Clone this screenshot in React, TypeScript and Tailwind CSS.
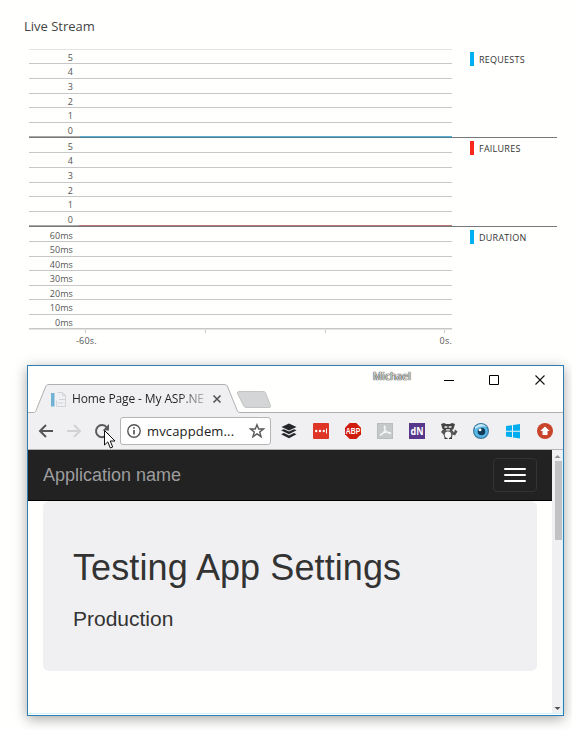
import type { ReactNode } from "react";

const UI = "font-['Open_Sans','Noto_Sans',sans-serif]";
const ARIAL = "font-['Liberation_Sans',Arial,sans-serif]";

type Row = { label: string; h: string; pad?: string };

const requests: Row[] = [
  { label: "5", h: "h-[14px]" },
  { label: "4", h: "h-[15px]" },
  { label: "3", h: "h-[15px]" },
  { label: "2", h: "h-[14px]" },
  { label: "1", h: "h-[15px]" },
];
const failures: Row[] = [
  { label: "5", h: "h-[15px]", pad: "pt-[2px]" },
  { label: "4", h: "h-[15px]" },
  { label: "3", h: "h-[15px]" },
  { label: "2", h: "h-[14px]" },
  { label: "1", h: "h-[15px]" },
];
const duration: Row[] = [
  { label: "60ms", h: "h-[15px]", pad: "pt-[2px]" },
  { label: "50ms", h: "h-[15px]" },
  { label: "40ms", h: "h-[14px]" },
  { label: "30ms", h: "h-[15px]" },
  { label: "20ms", h: "h-[14px]" },
  { label: "10ms", h: "h-[15px]" },
  { label: "0ms", h: "h-[14px]" },
];

function Label({ children, pad = "pt-px" }: { children: ReactNode; pad?: string }) {
  return <span className={`block w-[44px] ${pad} text-right text-[9px] leading-[14px] tracking-[0.1px] text-[#555]`}>{children}</span>;
}

function Rows({ rows }: { rows: Row[] }) {
  return (
    <>
      {rows.map((r) => (
        <div key={r.label} className={`${r.h} w-[423px] border-b border-[#c8c8c8]`}>
          <Label pad={r.pad}>{r.label}</Label>
        </div>
      ))}
    </>
  );
}

type SeriesProps = { rows: Row[]; name: string; swatch: string; legendPad: string; line?: ReactNode };

function Series({ rows, name, swatch, legendPad, line }: SeriesProps) {
  return (
    <div className="flex">
      <div className="w-[423px]">
        <Rows rows={rows} />
        {line && (
          <div className="flex h-[15px] flex-col justify-between">
            <div className="h-[13px]"><Label>0</Label></div>
            {line}
          </div>
        )}
      </div>
      <div className={`flex flex-1 items-start pl-[18px] ${legendPad} ${line ? "border-b border-[#777]" : ""}`}>
        <span className={`h-[14px] w-1 ${swatch}`} />
        <span className="ml-[5px] mt-px text-[9px] leading-[14px] tracking-[0.25px] text-[#333]">{name}</span>
      </div>
    </div>
  );
}

function Chart() {
  return (
    <div className="ml-[29px] h-[299px] w-[528px]">
      <div className="h-px w-[423px] bg-[#e4e4e4]" />
      <Series
        rows={requests}
        name="REQUESTS"
        swatch="bg-[#00b0f5]"
        legendPad="pt-[2px]"
        line={
          <div className="flex h-[2px]">
            <div className="w-[51px] border-b border-[#777] bg-[#aaa]" />
            <div className="flex-1 border-b border-[#4e7f95] bg-[#5cafd1]" />
          </div>
        }
      />
      <Series
        rows={failures}
        name="FAILURES"
        swatch="bg-[#f8281e]"
        legendPad="pt-[3px]"
        line={
          <div className="flex h-[2px]">
            <div className="w-[50px] border-b border-[#777] bg-[#aaa]" />
            <div className="flex-1 border-b border-[#777] bg-[#b97779]" />
          </div>
        }
      />
      <Series rows={duration} name="DURATION" swatch="bg-[#00b0f5]" legendPad="pt-[3px]" />
      <div className="flex h-1 w-[423px] border-t border-[#e4e4e4] pl-[56px]">
        <i className="h-[3px] w-px bg-[#c8c8c8]" />
        <i className="ml-[119px] h-[3px] w-px bg-[#c8c8c8]" />
        <i className="ml-[119px] h-[3px] w-px bg-[#c8c8c8]" />
        <i className="ml-[118px] h-[3px] w-px bg-[#c8c8c8]" />
      </div>
      <div className="flex w-[423px] justify-between pl-[47px] pt-px text-[9px] leading-[14px] tracking-[0.2px] text-[#555]">
        <span>-60s.</span>
        <span>0s.</span>
      </div>
    </div>
  );
}

function TabStrip() {
  return (
    <div className="relative h-[47px]">
      <svg className="absolute left-0 top-0" width="535" height="47" viewBox="28 366 535 47" fill="none">
        <path d="M28 412.500H33.500C35 412.500 35.600 411.500 36 410.500L45.500 387C46.300 385 47 384.500 49 384.500H224C226 384.500 227 385 227.700 387L237 410C237.700 412 238.500 412.500 240 412.500H563V414H28Z" fill="#f0f0f2" />
        <path d="M28 412.500H33.500C35 412.500 35.600 411.500 36 410.500L45.500 387C46.300 385 47 384.500 49 384.500H224C226 384.500 227 385 227.700 387L237 410C237.700 412 238.500 412.500 240 412.500H563" stroke="#b0b0b0" />
        <path d="M239 391.500H263.500Q265 391.500 265.600 393L270.500 405.500Q271 407.500 269 407.500H246Q244.500 407.500 243.800 406L237.500 393.500Q237 391.500 239 391.500Z" fill="#d4d5d7" stroke="#c4c4c4" />
        <rect x="51" y="393" width="3.500" height="13.500" fill="#6fb2d2" />
        <path d="M57.500 392.500H62.500L65.500 395.500V406.500H56.500V400.500M62.500 392.500V395.500H65.500M59 399.500H65M58 403H63" stroke="#d0d5da" />
        <path d="M213.500 395.500L220.500 402.500M220.500 395.500L213.500 402.500" stroke="#555" strokeWidth="1.600" />
        <path d="M444 380.500H454" stroke="#000" />
        <path d="M489.500 375.500H498.500V384.500H489.500Z" stroke="#000" />
        <path d="M535.500 375.500L544.500 384.500M544.500 375.500L535.500 384.500" stroke="#111" strokeWidth="1.100" />
      </svg>
      <div className="relative flex justify-between">
        <div className={`ml-[44px] mt-[25px] w-[132px] overflow-hidden whitespace-nowrap bg-gradient-to-r from-[#222] from-80% to-[#bbb] bg-clip-text text-[12px] leading-4 tracking-[-0.12px] text-transparent ${UI}`}>
          Home Page - My ASP.NE
        </div>
        <div className="mr-[152px] mt-[3px] text-[10px] leading-[14px] tracking-[0.25px] text-[#eee] [text-shadow:0_0_1px_#222,0_0_1px_#222,0_0_1px_#444]">Michael</div>
      </div>
    </div>
  );
}

function Extensions() {
  return (
    <svg className="ml-[10px]" width="276" height="36" viewBox="281 413 276 36" fill="none">
      <g fill="#24262a">
        <path d="M289 423.500L296.500 427L289 430.500L281.500 427Z" />
        <path d="M281.500 430L284 429.200L289 431.600L294 429.200L296.500 430.300L289 434.200L281.500 430.500Z" />
        <path d="M281.500 434L284 433L289 435.400L294 433L296.500 434.200L289 438.300L281.500 434.500Z" />
      </g>
      <rect x="313" y="423" width="16" height="16" rx="1" fill="#df3526" />
      <g fill="#fff">
        <circle cx="316.200" cy="431" r="1.200" /><circle cx="320" cy="431" r="1.200" /><circle cx="323.800" cy="431" r="1.200" />
        <rect x="326" y="428.500" width="1" height="5" />
      </g>
      <path d="M349.700 423H356.300L361 427.700V434.300L356.300 439H349.700L345 434.300V427.700L349.700 423Z" fill="#cf1c0c" />
      <text x="345.800" y="434" fontSize="8.500" fontWeight="bold" fill="#fff" fontFamily="Liberation Sans, sans-serif" textLength="14.400" lengthAdjust="spacingAndGlyphs">ABP</text>
      <rect x="377.500" y="423.500" width="15" height="15" fill="#c5c9c9" stroke="#b9bdbd" />
      <path d="M380 435.500C383 434 385.500 430.500 385 426.500C384.500 425.500 384 427 384.500 428.500C385.500 431 388 433 390.500 433.500C391.500 433 389 431.700 386 432.200C383 432.800 381 433.800 380 435.500" stroke="#f7f7f7" strokeWidth="1.200" />
      <rect x="409" y="423" width="16" height="16" fill="#56378c" />
      <text x="410.500" y="435" fontSize="11" fontWeight="bold" fill="#fff" fontFamily="Open Sans, sans-serif" textLength="13" lengthAdjust="spacingAndGlyphs">dN</text>
      <g>
        <path d="M441 424L444 423L446 424H450L452 423L455 424L453.500 429L450.500 431H445.500L442.500 429Z" fill="#444" />
        <path d="M444 430H452L454 432.500L455 429.500L457.500 431.500L455 435.500L452.500 434.500L452 438H444.500L443.500 434.500L441 432L442.500 430Z" fill="#555" />
        <ellipse cx="448" cy="434.800" rx="3.200" ry="3.400" fill="#f5f5f5" />
        <path d="M444.500 426.200H447.300V427.800H444.500ZM448.700 426.200H451.500V427.800H448.700ZM446 429.300H450V430.500H446Z" fill="#eee" />
        <path d="M444.500 438.500H447.500M449 438.500H452" stroke="#333" />
      </g>
      <circle cx="481" cy="431" r="8" fill="#3b789c" />
      <circle cx="481" cy="431" r="6.800" fill="#58b9e9" />
      <path d="M475 427Q481 421 487 427Q481 425 475 429Z" fill="#c7e9fa" />
      <circle cx="481.500" cy="431.500" r="3.800" fill="#123b58" />
      <circle cx="480" cy="429.700" r="1.500" fill="#fff" />
      <path d="M506 426L512 425.200V430.800H506ZM513 425L520 424V430.800H513ZM506 431.800H512V437.200L506 436.400ZM513 431.800H520V438.500L513 437.400Z" fill="#00adef" />
      <circle cx="545" cy="431" r="8" fill="#c8452b" />
      <path d="M545 426.500L549.700 431H547.500V435H542.500V431H540.300Z" fill="#fff" />
    </svg>
  );
}

function Toolbar() {
  return (
    <div className="flex h-[37px] items-center border-b border-[#b4b4b4] bg-[#f0f0f2]">
      <svg width="92" height="36" viewBox="28 413 92 36" fill="none" strokeWidth="2">
        <path d="M53 431H40.500M46 425L40 431L46 437" stroke="#555" />
        <path d="M67 431H79.500M74 425L80 431L74 437" stroke="#d2d2d2" />
        <path d="M106.800 427.500A6 6 0 1 0 107.700 433" stroke="#5a5a5a" />
        <path d="M109 424V430.500H102.500Z" fill="#5a5a5a" />
      </svg>
      <div className="flex h-[28px] w-[151px] items-center rounded-[3px] border border-[#b5b5b5] bg-white">
        <svg className="ml-[6px]" width="14" height="14" viewBox="0 0 14 14" fill="none">
          <circle cx="7" cy="7" r="6.200" stroke="#555" strokeWidth="1.400" />
          <path d="M7 6V10.500M7 3.200V4.800" stroke="#555" strokeWidth="1.700" />
        </svg>
        <span className={`ml-[6px] w-[87px] whitespace-nowrap text-[13px] leading-5 tracking-[0.15px] text-[#222] ${UI}`}>mvcappdem...</span>
        <svg className="ml-[15px]" width="16" height="16" viewBox="0 0 16 16" fill="none">
          <path d="M8 1.700L9.700 6H14.400L10.700 8.900L12.100 13.700L8 10.900L3.900 13.700L5.300 8.900L1.600 6H6.300Z" stroke="#5a5a5a" strokeWidth="1.400" />
        </svg>
      </div>
      <Extensions />
    </div>
  );
}

function Page() {
  return (
    <div className="flex h-[263px]">
      <main className={`w-[524px] bg-[#fffffd] ${ARIAL}`}>
        <nav className="flex h-[51px] items-center justify-between border-b border-black bg-[#222] pl-[15px] pr-[15px]">
          <span className="text-[18px] leading-5 text-[#9d9d9d]">Application name</span>
          <button className="flex h-[34px] w-[44px] flex-col items-center justify-center gap-1 rounded border border-[#333]">
            <i className="h-[2px] w-[22px] rounded-[1px] bg-white" />
            <i className="h-[2px] w-[22px] rounded-[1px] bg-white" />
            <i className="h-[2px] w-[22px] rounded-[1px] bg-white" />
          </button>
        </nav>
        <section className="mx-[15px] h-[170px] rounded-[6px] bg-[#f0f0f2] pl-[30px] pt-[47px] text-[#333]">
          <h1 className="whitespace-nowrap text-[36px] leading-10 tracking-[0.1px]">Testing App Settings</h1>
          <p className="mt-[16px] text-[21px] leading-[30px]">Production</p>
        </section>
      </main>
      <div className="flex w-[10px] flex-col items-center bg-[#f0f0f2]">
        <svg width="10" height="11" viewBox="0 0 10 11"><path d="M2.500 8L5.500 5L8.500 8Z" fill="#909090" /></svg>
        <div className="ml-[3px] h-[79px] w-[7px] bg-[#c2c2c4]" />
        <svg className="mt-auto" width="10" height="11" viewBox="0 0 10 11"><path d="M2.500 5H8.500L5.500 8Z" fill="#505050" /></svg>
      </div>
      <div className="w-px bg-[#d0f5fc]" />
    </div>
  );
}

function BrowserWindow() {
  return (
    <div className="relative ml-[27px] h-[351px] w-[537px] border border-[#2f7db5] bg-[#fffffd] shadow-[0_3px_12px_rgba(0,0,0,0.35)]">
      <TabStrip />
      <Toolbar />
      <Page />
      <div className="h-px bg-[#d0f5fc]" />
      <svg className="absolute left-[75px] top-[63px]" width="14" height="21" viewBox="0 0 14 21">
        <path d="M1.500 1.500V16L4.800 12.900L7.300 19L9.700 18L7.200 12H12Z" fill="#fff" stroke="#111" />
      </svg>
    </div>
  );
}

export default function App() {
  return (
    <div className={`h-[730px] w-[572px] overflow-hidden bg-[#fffffd] ${UI}`}>
      <h2 className="h-[49px] pl-[24px] pt-[17px] text-[13px] font-normal leading-[18px] text-[#444]">Live Stream</h2>
      <Chart />
      <div className="h-[17px]" />
      <BrowserWindow />
    </div>
  );
}
